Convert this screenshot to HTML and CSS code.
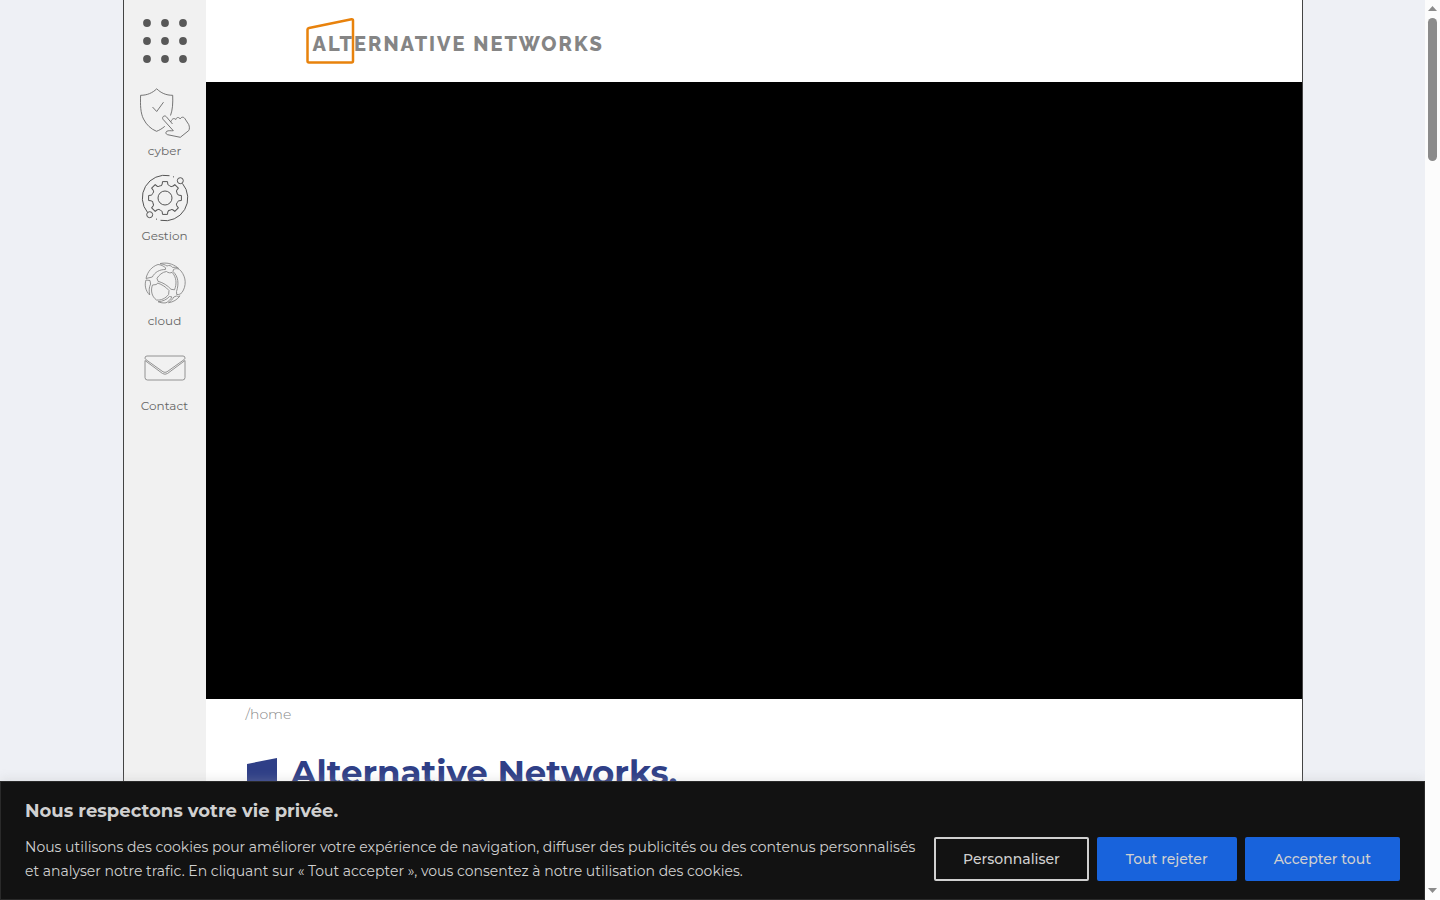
FILE: index.html
```
<!DOCTYPE html>
<html lang="fr">
<head>
    <meta charset="UTF-8">
    <meta name="viewport" content="width=device-width, initial-scale=1.0">
    <title>Alternative Networks</title>
    <link rel="stylesheet" href="styles.css">
</head>
<body>
    <div class="viewport">
        <div class="page">
            <nav class="sidebar" aria-label="Menu">
                <button class="menu-button" type="button" aria-label="Menu">
                    <svg width="50" height="50" viewBox="0 0 50 50">
                        <circle cx="7" cy="7" r="3.9"/><circle cx="25" cy="7" r="3.9"/><circle cx="43" cy="7" r="3.9"/>
                        <circle cx="7" cy="25" r="3.9"/><circle cx="25" cy="25" r="3.9"/><circle cx="43" cy="25" r="3.9"/>
                        <circle cx="7" cy="43" r="3.9"/><circle cx="25" cy="43" r="3.9"/><circle cx="43" cy="43" r="3.9"/>
                    </svg>
                </button>
                <a class="nav-item" href="#cyber">
                    <svg width="50" height="50" viewBox="0 0 50 50">
                        <path d="M30.5 27.5C32.6 22 33 15 32.7 7.3C26 7.3 21 5 16.7.8C12.5 5 7 7.3.6 7.3C.2 17 .5 25 3.5 31C6.5 37 11 41 16.5 43.3C19.5 42.2 22.3 40.5 24.8 38.3"/>
                        <path d="M12.5 19L16.7 23.5L23.5 14.2"/>
                        <path d="M32.5 36L26.3 28.7C24.5 26.7 21.5 29 23 31.3L33.3 42.7C31 43 28.5 42.2 26.6 43.4C25.3 44.5 26 46.3 27.6 46.7L40.3 49.3L48.7 42.6C49.7 41.3 49.6 38.5 48.7 36.5L44.8 30.5C43.6 28.7 41.2 28.7 40.2 31C39 28.9 36.5 29 35.7 31.5C34.5 29.9 32 30.3 30.8 33.8"/>
                    </svg>
                    <span>cyber</span>
                </a>
                <a class="nav-item gear" href="#gestion">
                    <svg width="50" height="50" viewBox="0 0 50 50">
                        <defs>
                            <path id="tooth" d="M22.2 11.2L22.5 8.6H27.5L27.8 11.2Q28.2 12.4 29.4 12.6Q31 14.3 32.8 13.3"/>
                        </defs>
                        <use href="#tooth"/>
                        <use href="#tooth" transform="rotate(45 25 25)"/>
                        <use href="#tooth" transform="rotate(90 25 25)"/>
                        <use href="#tooth" transform="rotate(135 25 25)"/>
                        <use href="#tooth" transform="rotate(180 25 25)"/>
                        <use href="#tooth" transform="rotate(225 25 25)"/>
                        <use href="#tooth" transform="rotate(270 25 25)"/>
                        <use href="#tooth" transform="rotate(315 25 25)"/>
                        <circle cx="25" cy="25" r="7"/>
                        <circle cx="40.3" cy="7.7" r="3"/>
                        <circle cx="9.7" cy="41.7" r="3"/>
                        <path d="M7.6 39.5A22.7 22.7 0 0 1 29.5 2.7"/>
                        <path d="M42.4 10.4A22.7 22.7 0 0 1 20.5 47.3"/>
                        <path d="M33 3.7L34 4M16 46L17 46.3"/>
                    </svg>
                    <span>Gestion</span>
                </a>
                <a class="nav-item light" href="#cloud">
                    <svg width="50" height="50" viewBox="0 0 50 50">
                        <path d="M20 5.7C22 5 27 4.5 31.5 6.2C34.5 7.3 37 9 38.7 10.5C36.5 9.3 34.5 9 32.6 9.5C31.5 7.5 29 7 27 8C25 6.8 23 6 20 5.7Z"/>
                        <path d="M18 6.5C21 6.8 23.5 8 25.6 9.8L25.4 11.5C19.5 11.5 15 14 12.3 19L6 20.5C7.5 13.5 12 8.5 18 6.5Z"/>
                        <path d="M33.5 11.5C36 10 39 10.5 41 13C46.3 19.5 46.5 28 42 34.5C40.8 36 39 36.8 36.7 36.5L36.5 33.5C39 26 38.5 18.5 33 13.5Z"/>
                        <path d="M26.5 13.5C28 15 31 15.2 32 14.3C36.5 19 37 26 34.5 31.8L31 31.3C27.5 27.5 23.5 24.8 18 23.3L17 20.3C19 17 22.5 14 26.5 13.5Z"/>
                        <path d="M6 22L10 22.5L10.6 26C9 29.5 8.8 32.5 9.7 37C5.5 33 4.3 27 6 22Z"/>
                        <path d="M12.5 27L16.5 26.5L17.6 25C22 26.5 26 29 29 32.5L28.6 36.5C25.5 40.5 21 42.5 16.5 42C11.5 38.5 10.5 32 12.5 27Z"/>
                        <path d="M18 43.7C22.5 43.5 26.5 41.8 29.5 38.5L32 39C30.5 41.5 28.5 43.5 26 44.8C23.5 45.2 20.5 44.8 18 43.7Z"/>
                        <path d="M28.5 44.7C31 43.2 32.5 41.2 33.8 39L36.5 38C38 38.6 39 38.5 40 37.8C37.5 41.5 33 44.2 28.5 44.7Z"/>
                    </svg>
                    <span>cloud</span>
                </a>
                <a class="nav-item light" href="#contact">
                    <svg width="50" height="50" viewBox="0 0 50 50">
                        <path d="M7 13H43Q45 13 45 15Q45 16 44 16.7L27 28.8Q25 30 23 28.8L6 16.7Q5 16 5 15Q5 13 7 13Z"/>
                        <path d="M5 17.5L22.5 30.5Q25 32 27.5 30.5L45 17.5V34.5Q45 37 42.5 37H7.5Q5 37 5 34.5Z"/>
                    </svg>
                    <span>Contact</span>
                </a>
            </nav>
            <main class="main">
                <header class="header">
                    <a class="logo" href="#home">
                        <svg width="50" height="50" viewBox="0 0 50 50">
                            <path d="M1.5 13.5Q1.5 12.2 3 11.9L45.5 3.3Q47 3 47 4.5V45Q47 46.5 45.5 46.5H3Q1.5 46.5 1.5 45Z"/>
                        </svg>
                        <span>ALTERNATIVE NETWORKS</span>
                    </a>
                </header>
                <div class="hero"></div>
                <section class="content">
                    <p class="breadcrumb">/home</p>
                    <h1 class="title">
                        <svg width="30" height="40" viewBox="0 0 30 40"><path d="M0 6L30 0V40H0Z"/></svg>
                        Alternative Networks.
                    </h1>
                </section>
            </main>
        </div>
        <section class="cookie-banner" aria-labelledby="cookieTitle">
            <h2 id="cookieTitle">Nous respectons votre vie privée.</h2>
            <div class="cookie-body">
                <p>Nous utilisons des cookies pour améliorer votre expérience de navigation, diffuser des publicités ou des contenus personnalisés et analyser notre trafic. En cliquant sur « Tout accepter », vous consentez à notre utilisation des cookies.</p>
                <div class="cookie-actions">
                    <button class="outline" type="button">Personnaliser</button>
                    <button type="button">Tout rejeter</button>
                    <button type="button">Accepter tout</button>
                </div>
            </div>
        </section>
    </div>
    <div class="scrollbar" aria-hidden="true">
        <svg width="9" height="5" viewBox="0 0 9 5"><path d="M0 5L4.5 0L9 5Z"/></svg>
        <div class="track"><div class="thumb"></div></div>
        <svg width="9" height="5" viewBox="0 0 9 5"><path d="M0 0H9L4.5 5Z"/></svg>
    </div>
</body>
</html>
```
FILE: styles.css
```
* {
    box-sizing: border-box;
}
body {
    margin: 0;
    height: 100vh;
    display: flex;
    overflow: hidden;
    background-color: #eef0f5;
    font-family: Montserrat, Inter, "Open Sans", sans-serif;
}
h1, h2, p {
    margin: 0;
}
a {
    text-decoration: none;
}
.viewport {
    position: relative;
    flex: 1;
    min-width: 0;
    overflow: hidden;
}
.page {
    display: flex;
    max-width: 1180px;
    min-height: 100%;
    margin: 0 auto;
    background-color: #fff;
    border: solid #444;
    border-width: 0 1px;
}
.sidebar {
    display: flex;
    flex-direction: column;
    flex: none;
    width: 82px;
    background-color: #f1f1f1;
}
.menu-button {
    height: 82px;
    padding: 0;
    border: none;
    background: none;
    cursor: pointer;
}
.menu-button svg {
    display: block;
    margin: 0 auto;
    fill: #585858;
}
.nav-item {
    display: flex;
    flex-direction: column;
    align-items: center;
    gap: 5px;
    padding: 6px 0 8px;
    font-size: 12px;
    line-height: 16px;
    color: #666;
}
.nav-item svg {
    fill: none;
    stroke: #666;
    stroke-width: 0.9;
    stroke-linejoin: round;
}
.nav-item.gear svg {
    stroke: #555;
    stroke-width: 1;
}
.nav-item.light svg {
    stroke: #888;
}
.main {
    flex: 1;
    min-width: 0;
}
.header {
    display: flex;
    align-items: center;
    height: 82px;
    padding-left: 100px;
}
.logo {
    display: grid;
    align-items: center;
    color: #858585;
    font-family: Raleway, Lato, sans-serif;
    font-size: 20px;
    font-weight: 800;
    line-height: 24px;
    letter-spacing: 2px;
}
.logo svg, .logo span {
    grid-area: 1 / 1;
}
.logo svg {
    z-index: 1;
    fill: none;
    stroke: #e8820c;
    stroke-width: 2.5;
}
.logo span {
    padding: 5px 0 0 7px;
}
.hero {
    aspect-ratio: 16 / 9;
    background-color: #000;
}
.content {
    padding: 4px 40px 200px;
}
.breadcrumb {
    font-size: 14px;
    font-weight: 300;
    line-height: 22px;
    color: #888;
}
.title {
    display: flex;
    align-items: center;
    gap: 14px;
    margin-top: 23px;
    font-size: 34px;
    font-weight: 700;
    line-height: 48px;
    color: #2f3f87;
}
.title svg {
    margin: 10px 0 0 1px;
    fill: #2f3f87;
}
.cookie-banner {
    position: absolute;
    right: 0;
    bottom: 0;
    left: 0;
    padding: 16px 24px;
    border: 1px solid #2a2a2a;
    background-color: #121212;
    box-shadow: 0 -1px 10px rgba(172, 171, 171, 0.3);
    color: #d0d0d0;
}
.cookie-banner h2 {
    margin-bottom: 10px;
    font-size: 18px;
    font-weight: 700;
    line-height: 27px;
}
.cookie-body {
    display: flex;
    align-items: center;
    justify-content: space-between;
    gap: 18px;
}
.cookie-body p {
    font-size: 14px;
    font-weight: 400;
    line-height: 24px;
}
.cookie-actions {
    display: flex;
    flex: none;
    gap: 8px;
}
.cookie-actions button {
    height: 44px;
    padding: 0 27px;
    border: 2px solid #1863dc;
    border-radius: 2px;
    background-color: #1863dc;
    color: #d0d0d0;
    font-family: inherit;
    font-size: 14px;
    font-weight: 500;
    line-height: 24px;
    cursor: pointer;
}
.cookie-actions .outline {
    border-color: #d0d0d0;
    background: none;
}
.scrollbar {
    display: flex;
    flex-direction: column;
    align-items: center;
    flex: none;
    width: 15px;
    padding: 6px 0 7px;
    background-color: #fcfcfc;
}
.scrollbar svg {
    fill: #8b8b8b;
}
.track {
    flex: 1;
    padding: 7px 0;
}
.thumb {
    width: 9px;
    height: 143px;
    border-radius: 5px;
    background-color: #8b8b8b;
}
```
